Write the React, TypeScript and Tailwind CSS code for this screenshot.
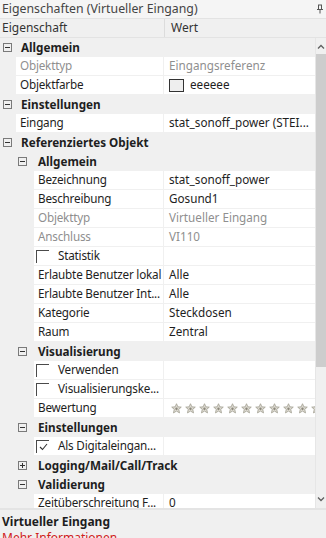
import React from 'react';

type Row = {
  kind: 'cat' | 'item';
  level: 0 | 1;
  label: string;
  value?: string;
  dim?: boolean;
  closed?: boolean;
  check?: 'off' | 'on';
  swatch?: boolean;
  stars?: boolean;
};

const rows: Row[] = [
  { kind: 'cat', level: 0, label: 'Allgemein' },
  { kind: 'item', level: 0, label: 'Objekttyp', value: 'Eingangsreferenz', dim: true },
  { kind: 'item', level: 0, label: 'Objektfarbe', value: 'eeeeee', swatch: true },
  { kind: 'cat', level: 0, label: 'Einstellungen' },
  { kind: 'item', level: 0, label: 'Eingang', value: 'stat_sonoff_power (STEI...' },
  { kind: 'cat', level: 0, label: 'Referenziertes Objekt' },
  { kind: 'cat', level: 1, label: 'Allgemein' },
  { kind: 'item', level: 1, label: 'Bezeichnung', value: 'stat_sonoff_power' },
  { kind: 'item', level: 1, label: 'Beschreibung', value: 'Gosund1' },
  { kind: 'item', level: 1, label: 'Objekttyp', value: 'Virtueller Eingang', dim: true },
  { kind: 'item', level: 1, label: 'Anschluss', value: 'VI110', dim: true },
  { kind: 'item', level: 1, label: 'Statistik', check: 'off' },
  { kind: 'item', level: 1, label: 'Erlaubte Benutzer lokal', value: 'Alle' },
  { kind: 'item', level: 1, label: 'Erlaubte Benutzer Int...', value: 'Alle' },
  { kind: 'item', level: 1, label: 'Kategorie', value: 'Steckdosen' },
  { kind: 'item', level: 1, label: 'Raum', value: 'Zentral' },
  { kind: 'cat', level: 1, label: 'Visualisierung' },
  { kind: 'item', level: 1, label: 'Verwenden', check: 'off' },
  { kind: 'item', level: 1, label: 'Visualisierungske...', check: 'off' },
  { kind: 'item', level: 1, label: 'Bewertung', stars: true },
  { kind: 'cat', level: 1, label: 'Einstellungen' },
  { kind: 'item', level: 1, label: 'Als Digitaleingan...', check: 'on' },
  { kind: 'cat', level: 1, label: 'Logging/Mail/Call/Track', closed: true },
  { kind: 'cat', level: 1, label: 'Validierung' },
  { kind: 'item', level: 1, label: 'Zeitüberschreitung F...', value: '0' },
];

const Toggle = ({ closed }: { closed?: boolean }) => (
  <svg width="9" height="9" viewBox="0 0 9 9" className="shrink-0">
    <rect x="0.5" y="0.5" width="8" height="8" fill="none" stroke="#7a7a7a" />
    <line x1="2" y1="4.5" x2="7" y2="4.5" stroke="#333" />
    {closed && <line x1="4.5" y1="2" x2="4.5" y2="7" stroke="#333" />}
  </svg>
);

const Star = () => (
  <svg width="11" height="11" viewBox="0 0 12 12" className="shrink-0">
    <polygon
      points="6,0.8 7.5,4.2 11.2,4.5 8.4,6.9 9.3,10.8 6,8.8 2.7,10.8 3.6,6.9 0.8,4.5 4.5,4.2"
      fill="#dedbd2"
      stroke="#a3a093"
      strokeWidth="0.9"
    />
    <circle cx="6" cy="6.3" r="1.3" fill="#8c887c" />
  </svg>
);

const Checkbox = ({ on }: { on?: boolean }) => (
  <div className="w-[13px] h-[13px] border-t border-l border-[#4a4a4a] flex items-center justify-center shrink-0">
    {on && (
      <svg width="9" height="8" viewBox="0 0 9 8">
        <path d="M1 4 L3.5 6.5 L8 1" fill="none" stroke="#333" strokeWidth="1.1" />
      </svg>
    )}
  </div>
);

const PropRow = ({ row }: { row: Row }) => {
  if (row.kind === 'cat') {
    return (
      <div className="h-[19px] flex items-center bg-[#f0f0f0] shrink-0 whitespace-nowrap overflow-hidden">
        <div className={row.level === 0 ? 'w-[21px] pl-[3px] flex shrink-0' : 'w-[38px] pl-[18px] flex shrink-0'}>
          <Toggle closed={row.closed} />
        </div>
        <span className="font-bold text-[#1e1e1e]">{row.label}</span>
      </div>
    );
  }
  const textCls = row.dim ? 'text-[#8f8f8f]' : 'text-[#1e1e1e]';
  return (
    <div className="h-[19px] flex bg-[#f0f0f0] shrink-0 whitespace-nowrap">
      <div className={row.level === 0 ? 'w-[16px] shrink-0' : 'w-[34px] shrink-0'} />
      <div className="flex-1 flex bg-white border-b border-[#f0f0f0]">
        <div className={`${row.level === 0 ? 'w-[148px]' : 'w-[130px]'} flex items-center pl-[4px] overflow-hidden border-r border-[#f0f0f0] shrink-0 tracking-[-0.2px]`}>
          {row.check ? (
            <>
              <span className="-ml-[2px]"><Checkbox on={row.check === 'on'} /></span>
              <span className={`ml-[9px] ${textCls}`}>{row.label}</span>
            </>
          ) : (
            <span className={textCls}>{row.label}</span>
          )}
        </div>
        <div className="flex-1 flex items-center pl-[5px] overflow-hidden">
          {row.swatch && <div className="w-[15px] h-[13px] border border-[#333] bg-[#eeeeee] mr-[6px] shrink-0" />}
          {row.stars && (
            <div className="flex gap-[3px] pl-[2px]">
              {Array.from({ length: 11 }).map((_, i) => (
                <Star key={i} />
              ))}
            </div>
          )}
          {row.value && <span className={textCls}>{row.value}</span>}
        </div>
      </div>
    </div>
  );
};

export default function App() {
  return (
    <div
      className="w-[326px] h-[538px] overflow-hidden bg-[#f0f0f0] flex flex-col text-[11.7px] leading-none"
      style={{ fontFamily: '"Noto Sans", "Open Sans", sans-serif' }}
    >
      <div className="h-[18px] flex items-center justify-between pl-[2px] pr-[2px] bg-[#f5f5f5] text-[#444] text-[12.3px] shrink-0">
        <span>Eigenschaften (Virtueller Eingang)</span>
        <svg width="8" height="10" viewBox="0 0 8 10">
          <path d="M2 1 H6 M2.5 1 V5.5 M5.5 1 V5.5 M1 5.5 H7 M4 5.5 V9.5" fill="none" stroke="#555" strokeWidth="1" />
        </svg>
      </div>
      <div className="h-[20px] flex items-center bg-[#f0f0f0] border-t border-b border-[#e3e3e3] shrink-0 text-[#333] text-[12px]">
        <div className="w-[165px] h-full flex items-center pl-[2px] border-r border-[#dcdcdc]">Eigenschaft</div>
        <div className="pl-[6px]">Wert</div>
      </div>
      <div className="h-[470px] flex shrink-0 overflow-hidden">
        <div className="w-[315px] flex flex-col overflow-hidden">
          {rows.map((r, i) => (
            <PropRow key={i} row={r} />
          ))}
        </div>
        <div className="w-[11px] flex flex-col items-center bg-[#f0f0f0] border-l border-[#e6e6e6]">
          <svg width="8" height="6" viewBox="0 0 8 6" className="mt-[6px]">
            <path d="M1 4.5 L4 1.5 L7 4.5" fill="none" stroke="#606060" strokeWidth="1.3" />
          </svg>
          <div className="w-full h-[313px] mt-[4px] bg-[#cdcdcd]" />
          <div className="flex-1" />
          <svg width="8" height="6" viewBox="0 0 8 6" className="mb-[6px]">
            <path d="M1 1.5 L4 4.5 L7 1.5" fill="none" stroke="#606060" strokeWidth="1.3" />
          </svg>
        </div>
      </div>
      <div className="h-[2px] bg-[#e4e4e4] shrink-0" />
      <div className="flex-1 flex flex-col pl-[2px] pt-[6px] gap-[4px] text-[12px]">
        <span className="font-bold text-[#1e1e1e]">Virtueller Eingang</span>
        <span className="text-[#d02020]">Mehr Informationen</span>
      </div>
    </div>
  );
}
